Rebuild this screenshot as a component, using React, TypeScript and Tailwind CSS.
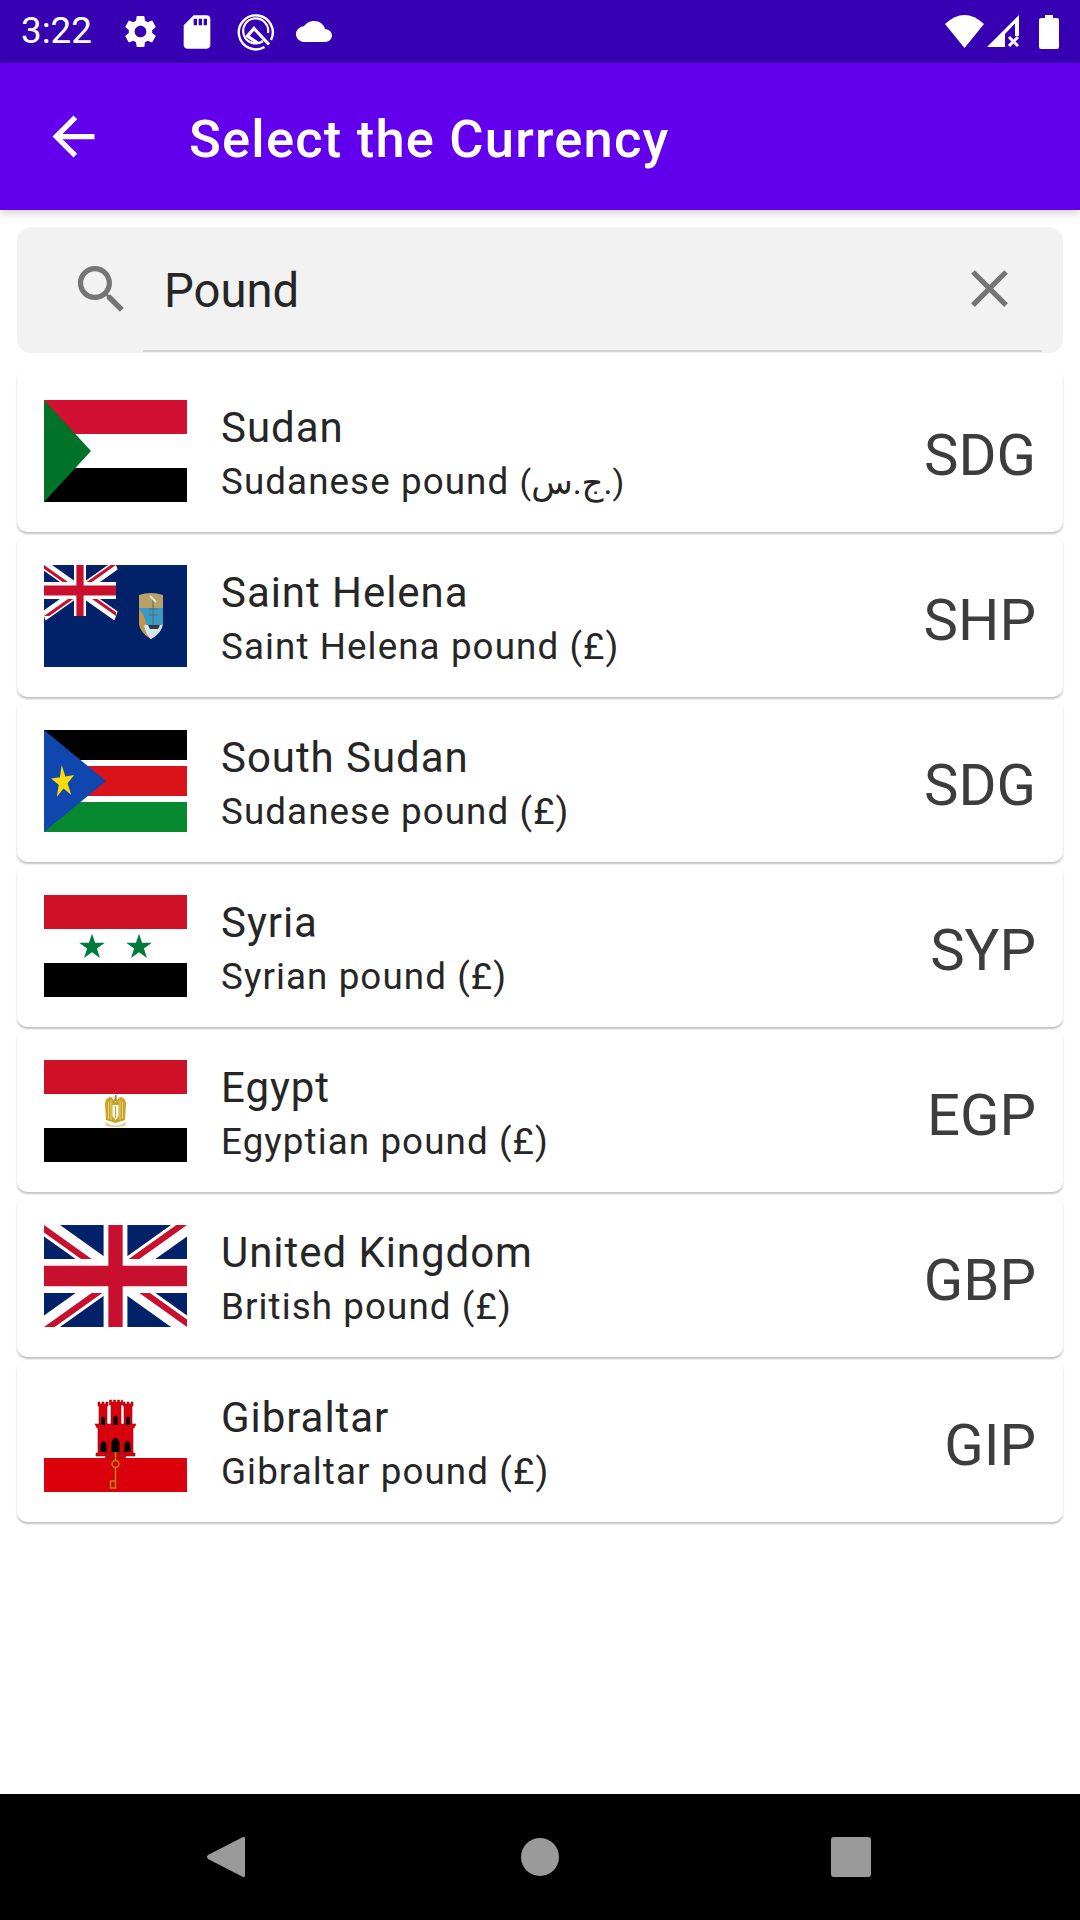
import { Fragment } from "react";

const white = "#ffffff";

function Gear() {
  return (
    <svg width="39" height="39" viewBox="0 0 24 24" fill={white}>
      <path d="M19.14 12.94c.04-.3.06-.61.06-.94 0-.32-.02-.64-.07-.94l2.03-1.58c.18-.14.23-.41.12-.61l-1.92-3.32c-.12-.22-.37-.29-.59-.22l-2.39.96c-.5-.38-1.03-.7-1.62-.94l-.36-2.54c-.04-.24-.24-.41-.48-.41h-3.84c-.24 0-.43.17-.47.41l-.36 2.54c-.59.24-1.13.57-1.62.94l-2.39-.96c-.22-.08-.47 0-.59.22L2.74 8.87c-.12.21-.08.47.12.61l2.03 1.58c-.05.3-.09.63-.09.94s.02.64.07.94l-2.03 1.58c-.18.14-.23.41-.12.61l1.92 3.32c.12.22.37.29.59.22l2.39-.96c.5.38 1.03.7 1.62.94l.36 2.54c.05.24.24.41.48.41h3.84c.24 0 .44-.17.47-.41l.36-2.54c.59-.24 1.13-.56 1.62-.94l2.39.96c.22.08.47 0 .59-.22l1.92-3.32c.12-.22.07-.47-.12-.61l-2.01-1.58zM12 15.6c-1.98 0-3.6-1.62-3.6-3.6s1.62-3.6 3.6-3.6 3.6 1.62 3.6 3.6-1.62 3.6-3.6 3.6z" />
    </svg>
  );
}

function SdCard() {
  return (
    <svg width="40" height="40" viewBox="0 0 24 24" fill={white}>
      <path d="M18 2h-8L4.02 8 4 20c0 1.1.9 2 2 2h12c1.1 0 2-.9 2-2V4c0-1.1-.9-2-2-2zm-6 6h-2V4h2v4zm3 0h-2V4h2v4zm3 0h-2V4h2v4z" />
    </svg>
  );
}

function QLogo() {
  return (
    <svg width="38" height="38" viewBox="0 0 38 38" fill="none" stroke={white}>
      <path d="M27.5 34 A17 17 0 1 1 34 27" strokeWidth="2.4" />
      <path d="M26 28 A12.500 12.500 0 1 1 31 20" strokeWidth="2.2" />
      <path d="M20.500 30 L10.500 23 L17 15.500 L32 31.500" strokeWidth="3.2" />
    </svg>
  );
}

function Cloud() {
  return (
    <svg width="36" height="21" viewBox="0 4 24 16" preserveAspectRatio="none" fill={white}>
      <path d="M19.35 10.04C18.67 6.59 15.64 4 12 4 9.11 4 6.6 5.64 5.35 8.04 2.34 8.36 0 10.91 0 14c0 3.31 2.69 6 6 6h13c2.76 0 5-2.24 5-5 0-2.64-2.05-4.78-4.65-4.96z" />
    </svg>
  );
}

function StatusBar() {
  return (
    <div className="flex h-[63px] items-center bg-[#3700b3] text-white">
      <span className="ml-[21px] w-[103px] text-[36.75px] leading-none">3:22</span>
      <div className="ml-[-3px] flex items-center">
        <Gear />
        <div className="ml-[17px]"><SdCard /></div>
        <div className="ml-[20px]"><QLogo /></div>
        <div className="ml-[21px]"><Cloud /></div>
      </div>
      <div className="ml-auto flex items-center">
        <svg width="39" height="33" viewBox="0 0 39 33" fill={white}>
          <path d="M19.5 33 L0 9 Q19.5 -9 39 9 Z" />
        </svg>
        <svg className="ml-[3px]" width="33" height="33" viewBox="0 0 33 33" fill={white}>
          <path d="M0 32 L32 0 V21 H28 V8.5 L18 19 V32 Z" />
          <path d="M22 22 L31 31 M31 22 L22 31" stroke={white} strokeWidth="3" />
        </svg>
        <svg className="ml-[19px] mr-[21px]" width="20" height="34" viewBox="0 0 20 34" fill={white}>
          <path d="M6 0 H14 V3 H18 Q20 3 20 5 V32 Q20 34 18 34 H2 Q0 34 0 32 V5 Q0 3 2 3 H6 Z" />
        </svg>
      </div>
    </div>
  );
}

function AppBar() {
  return (
    <div className="relative z-10 flex h-[147px] items-center bg-[#6200ee] shadow-[0_3px_8px_rgba(0,0,0,0.18)]">
      <svg className="ml-[42px]" width="63" height="63" viewBox="0 0 24 24" fill={white}>
        <path d="M20 11H7.83l5.59-5.59L12 4l-8 8 8 8 1.41-1.41L7.83 13H20v-2z" />
      </svg>
      <span className="ml-[84px] mt-[6px] text-[52.5px] font-medium leading-none tracking-[1.2px] text-white">Select the Currency</span>
    </div>
  );
}

function SearchBox() {
  return (
    <div className="flex h-[126px] items-start rounded-[14px] bg-[#f2f2f2]">
      <svg className="ml-[53px] mt-[31px] shrink-0" width="63" height="63" viewBox="0 0 24 24" fill="#757575">
        <path d="M15.5 14h-.79l-.28-.27C15.41 12.59 16 11.11 16 9.5 16 5.91 13.09 3 9.5 3S3 5.91 3 9.5 5.91 16 9.5 16c1.61 0 3.09-.59 4.23-1.57l.27.28v.79l5 4.99L20.49 19l-4.99-5zm-6 0C7.01 14 5 11.99 5 9.5S7.01 5 9.5 5 14 7.01 14 9.5 11.99 14 9.5 14z" />
      </svg>
      <div className="ml-[10px] mr-[21px] flex h-[125px] flex-1 items-center justify-between border-b-[2px] border-[#d4d4d4] pr-[21px]">
        <span className="ml-[21px] mt-[6px] text-[47.25px] leading-none text-[#262626]">Pound</span>
        <svg width="63" height="63" viewBox="0 0 24 24" fill="#757575">
          <path d="M19 6.41L17.59 5 12 10.59 6.41 5 5 6.41 10.59 12 5 17.59 6.41 19 12 13.41 17.59 19 19 17.59 13.41 12z" />
        </svg>
      </div>
    </div>
  );
}

function Bands({ top, bottom }: { top: string; bottom: string }) {
  return (
    <Fragment>
      <rect width="143" height="34" fill={top} />
      <rect y="34" width="143" height="34" fill="#fff" />
      <rect y="68" width="143" height="34" fill={bottom} />
    </Fragment>
  );
}

function Star({ cx, cy, r, fill, rotate = 0, sx = 1 }: { cx: number; cy: number; r: number; fill: string; rotate?: number; sx?: number }) {
  const pts: string[] = [];
  for (let i = 0; i < 10; i++) {
    const rad = i % 2 === 0 ? r : r * 0.382;
    const a = ((-90 + rotate + i * 36) * Math.PI) / 180;
    pts.push(`${cx + sx * rad * Math.cos(a)},${cy + rad * Math.sin(a)}`);
  }
  return <polygon points={pts.join(" ")} fill={fill} />;
}

// union jack drawn from the 60x30 construction, stretched into a w x h box
function UnionJack({ w, h }: { w: number; h: number }) {
  const clip = `jack-${w}`;
  return (
    <g transform={`scale(${w / 60} ${h / 30})`}>
      <clipPath id={clip}>
        <path d="M30 15 H60 V30 Z V30 H0 Z H0 V0 Z V0 H60 Z" />
      </clipPath>
      <rect width="60" height="30" fill="#012169" />
      <path d="M0 0 L60 30 M60 0 L0 30" stroke="#fff" strokeWidth="6" />
      <path d="M0 0 L60 30 M60 0 L0 30" stroke="#c8102e" strokeWidth="4" clipPath={`url(#${clip})`} />
      <path d="M30 0 V30 M0 15 H60" stroke="#fff" strokeWidth="10" />
      <path d="M30 0 V30 M0 15 H60" stroke="#c8102e" strokeWidth="6" />
    </g>
  );
}

function FlagSudan() {
  return (
    <Fragment>
      <Bands top="#d21034" bottom="#000" />
      <polygon points="0,0 47,51 0,102" fill="#007229" />
    </Fragment>
  );
}

function FlagHelena() {
  return (
    <Fragment>
      <rect width="143" height="102" fill="#012169" />
      <UnionJack w={72} h={51} />
      <path d="M95 30 Q107 26 119 30 V58 Q118 68 107 74 Q96 68 95 58 Z" fill="#b9a268" />
      <rect x="95" y="43" width="24" height="17" fill="#3b9ac4" />
      <path d="M95 44 Q103 52 103 70 Q96 66 95 58 Z" fill="#c4964a" />
      <path d="M100 60 H119 V58 Q118 68 107 74 Q102 70 100 60 Z" fill="#d6e6ea" />
      <path d="M104 60 H116 L114 64 H106 Z" fill="#33393f" />
      <path d="M109 34 V60 M105 44 H114 M105 50 H114" stroke="#5b6a68" strokeWidth="1" />
      <path d="M106 31 L112 37" stroke="#e4e4dc" strokeWidth="2" />
    </Fragment>
  );
}

function FlagSouthSudan() {
  return (
    <Fragment>
      <rect width="143" height="30" fill="#000" />
      <rect y="30" width="143" height="6" fill="#fff" />
      <rect y="36" width="143" height="30" fill="#da121a" />
      <rect y="66" width="143" height="6" fill="#fff" />
      <rect y="72" width="143" height="30" fill="#078930" />
      <polygon points="0,0 62,51 0,102" fill="#0f47af" />
      <Star cx={19} cy={52} r={17} fill="#fcdd09" rotate={-6} sx={0.72} />
    </Fragment>
  );
}

function FlagSyria() {
  return (
    <Fragment>
      <Bands top="#ce1126" bottom="#000" />
      <Star cx={48} cy={52} r={13.5} fill="#007a3d" />
      <Star cx={95} cy={52} r={13.5} fill="#007a3d" />
    </Fragment>
  );
}

function FlagEgypt() {
  return (
    <Fragment>
      <Bands top="#ce1126" bottom="#000" />
      <path d="M61 44 Q61 38 67 37 L71.500 42 L76 37 Q82 38 82 44 L81 60 L71.500 63 L62 60 Z" fill="#c9a227" />
      <path d="M64.500 42 V59 M67 40 V60 M76 40 V60 M78.500 42 V59" stroke="#e8d27a" strokeWidth="1" />
      <path d="M70 41 L71 35 H72.500 L73 41 Z" fill="#b8892a" />
      <path d="M68.500 45 H74.500 V56 L71.500 60 L68.500 56 Z" fill="#fff" />
      <path d="M71.500 46 V58" stroke="#c9a227" strokeWidth="1.200" />
      <path d="M61 62 Q71.500 69 82 62 L81 66 Q71.500 68 62 66 Z" fill="#e6d08a" />
    </Fragment>
  );
}

function FlagGibraltar() {
  const red = "#da000c";
  const edge = "#8d0a12";
  return (
    <Fragment>
      <rect width="143" height="68" fill="#fff" />
      <rect y="68" width="143" height="34" fill={red} />
      <g fill={red} stroke={edge} strokeWidth="0.6">
        <path d="M54 12 H56 V14 H58 V12 H60 V14 H62 V12 H64 V16 H63 V34 H55 V16 H54 Z" />
        <path d="M65.500 10 H67.500 V12 H69.500 V10 H71.500 V12 H73.500 V10 H75.500 V12 H77.500 V10 H78.500 V15 H77 V34 H67 V15 H65.500 Z" />
        <path d="M79 12 H81 V14 H83 V12 H85 V14 H87 V12 H89 V16 H88 V34 H80 V16 H79 Z" />
        <path d="M51 34 H92 L90 38 H89 V63 H91 V66 H52 V63 H54 V38 H53 Z" />
        <path d="M64 38 V63 M79 38 V63" fill="none" />
        <rect x="61.500" y="63" width="20" height="5" fill="#c40a14" />
      </g>
      <path d="M57 35 V28 Q59 25 61 28 V35 Z M69.500 35 V27 Q71.500 24 73.500 27 V35 Z M82 35 V28 Q84 25 86 28 V35 Z" fill="#000" />
      <path d="M67.500 62 V52 Q71.500 44 75.500 52 V62 Z M56.500 62 V54 Q59.500 48 62.500 54 V62 Z M80.500 62 V54 Q83.500 48 86.500 54 V62 Z" fill="#000" />
      <g fill="none" stroke="#b8860b" strokeWidth="1.500">
        <path d="M71.500 62 V70" />
        <circle cx="71.500" cy="74" r="3.500" />
        <path d="M71.500 78 V99" />
        <path d="M71.500 91 H66.500 V98 H71.500" />
      </g>
    </Fragment>
  );
}

const rows = [
  {
    name: "Sudan",
    sub: (
      <Fragment>
        Sudanese pound <span className="text-[34px] tracking-normal">(ج.س.)</span>
      </Fragment>
    ),
    code: "SDG",
    flag: <FlagSudan />,
  },
  { name: "Saint Helena", sub: "Saint Helena pound (£)", code: "SHP", flag: <FlagHelena /> },
  { name: "South Sudan", sub: "Sudanese pound (£)", code: "SDG", flag: <FlagSouthSudan /> },
  { name: "Syria", sub: "Syrian pound (£)", code: "SYP", flag: <FlagSyria /> },
  { name: "Egypt", sub: "Egyptian pound (£)", code: "EGP", flag: <FlagEgypt /> },
  { name: "United Kingdom", sub: "British pound (£)", code: "GBP", flag: <UnionJack w={143} h={102} /> },
  { name: "Gibraltar", sub: "Gibraltar pound (£)", code: "GIP", flag: <FlagGibraltar /> },
];

function CurrencyRow({ name, sub, code, flag }: (typeof rows)[number]) {
  return (
    <div className="flex h-[162px] items-center rounded-[10px] bg-white pl-[27px] pr-[27px] shadow-[0_2px_2px_rgba(0,0,0,0.24),0_0_1px_rgba(0,0,0,0.06)]">
      <svg className="shrink-0" width="143" height="102" viewBox="0 0 143 102">
        {flag}
      </svg>
      <div className="ml-[34px] mt-[7px] flex flex-col">
        <span className="text-[42px] leading-[54px] tracking-[0.95px] text-[#262626]">{name}</span>
        <span className="text-[36.75px] leading-[54px] tracking-[1.09px] text-[#262626]">{sub}</span>
      </div>
      <span className="ml-auto mt-[7px] text-[58px] leading-none text-[#3d3d3d]">{code}</span>
    </div>
  );
}

function NavBar() {
  return (
    <div className="flex h-[126px] items-center bg-black">
      <svg className="ml-[207px]" width="38" height="42" viewBox="0 0 38 42" fill="#9a9a9a">
        <path d="M36 1 Q38 0 38 3 V39 Q38 42 36 41 L1 23 Q-1 21 1 19 Z" />
      </svg>
      <div className="ml-[276px] h-[38px] w-[38px] rounded-full bg-[#9a9a9a]" />
      <div className="ml-[272px] h-[40px] w-[40px] rounded-[3px] bg-[#9a9a9a]" />
    </div>
  );
}

export default function App() {
  return (
    <div className="flex h-[1920px] w-[1080px] flex-col overflow-hidden bg-white font-['Roboto','DejaVu_Sans',sans-serif]">
      <StatusBar />
      <AppBar />
      <div className="flex flex-1 flex-col px-[17px] pt-[17px]">
        <SearchBox />
        <div className="mt-[17px] flex flex-col gap-[3px]">
          {rows.map((row) => (
            <CurrencyRow key={row.name} {...row} />
          ))}
        </div>
      </div>
      <NavBar />
    </div>
  );
}
